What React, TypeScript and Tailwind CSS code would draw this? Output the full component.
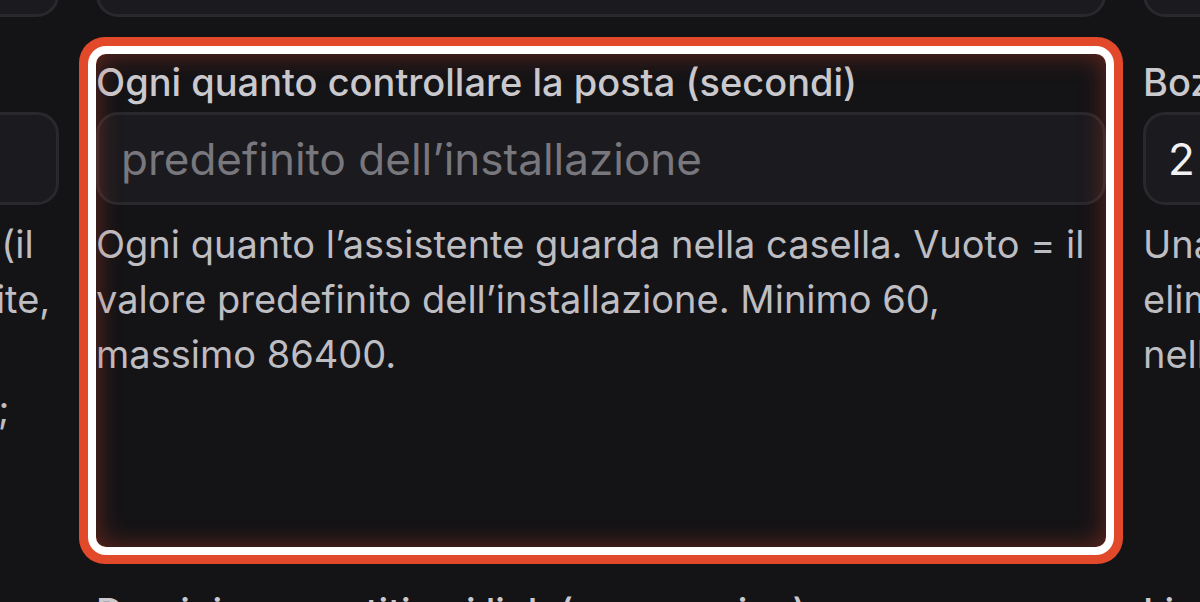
import React from "react";

type Field = {
  label: string;
  value?: string;
  placeholder?: string;
  help?: React.ReactNode;
  highlight?: boolean;
};

const rows: Field[][] = [
  [
    { label: "Indirizzo del server IMAP", value: "imap.esempio.it" },
    { label: "Porta IMAP", value: "993" },
    { label: "Cartella da controllare", value: "INBOX" },
  ],
  [
    {
      label: "Giorni di conservazione dei messaggi",
      placeholder: "30",
      help: (
        <>
          Per quanti giorni tenere i messaggi già letti in casella (il
          <br />
          valore predefinito rimane valido). Vuoto = nessun limite,
          <br />
          i messaggi restano finché non li rimuovi
          <br />
          a mano dalla tua casella, o li sposti in un’altra cartella;
          <br />
          gli allegati seguono la stessa regola
          <br />
          dei messaggi.
        </>
      ),
    },
    {
      label: "Ogni quanto controllare la posta (secondi)",
      placeholder: "predefinito dell’installazione",
      help: "Ogni quanto l’assistente guarda nella casella. Vuoto = il valore predefinito dell’installazione. Minimo 60, massimo 86400.",
      highlight: true,
    },
    {
      label: "Bozze da tenere per ogni conversazione",
      value: "2",
      help: (
        <>
          Una bozza in più viene
          <br />
          eliminata automaticamente
          <br />
          nella cartella Bozze.
        </>
      ),
    },
  ],
  [
    { label: "Ordine di risposta", value: "" },
    { label: "Domini consentiti nei link (uno per riga)", value: "" },
    { label: "Limite allegati (MB)", value: "" },
  ],
];

function FieldBox({ field }: { field: Field }) {
  return (
    <div className="relative flex flex-col">
      <label className="mb-[2px] whitespace-nowrap text-[38px] font-medium leading-[56px] text-[#c9c9ce]">
        {field.label}
      </label>
      <input
        readOnly
        value={field.value ?? ""}
        placeholder={field.placeholder}
        className="h-[93px] w-full rounded-[22px] border-[3px] border-[#29282d] bg-[#1b1a1e] px-[22px] text-[44px] text-[#f1f1f3] outline-none placeholder:text-[#77777d]"
      />
      {field.help && (
        <p className="mt-[12px] text-[38px] leading-[55px] text-[#bdbdc2]">
          {field.help}
        </p>
      )}
      {field.highlight && (
        <div className="pointer-events-none absolute inset-0 rounded-[10px] shadow-[0_0_0_8px_#ffffff,0_0_0_17px_#e2492b,inset_0_0_26px_rgba(226,73,43,0.4)]" />
      )}
    </div>
  );
}

export default function App() {
  return (
    <div className="h-[602px] overflow-hidden bg-[#141316] font-['Inter',sans-serif]">
      <div className="ml-[-951px] mt-[-134px] grid w-max grid-cols-[1010px_1010px_1010px] gap-[37px]">
        {rows.flat().map((f, i) => (
          <FieldBox key={i} field={f} />
        ))}
      </div>
    </div>
  );
}
